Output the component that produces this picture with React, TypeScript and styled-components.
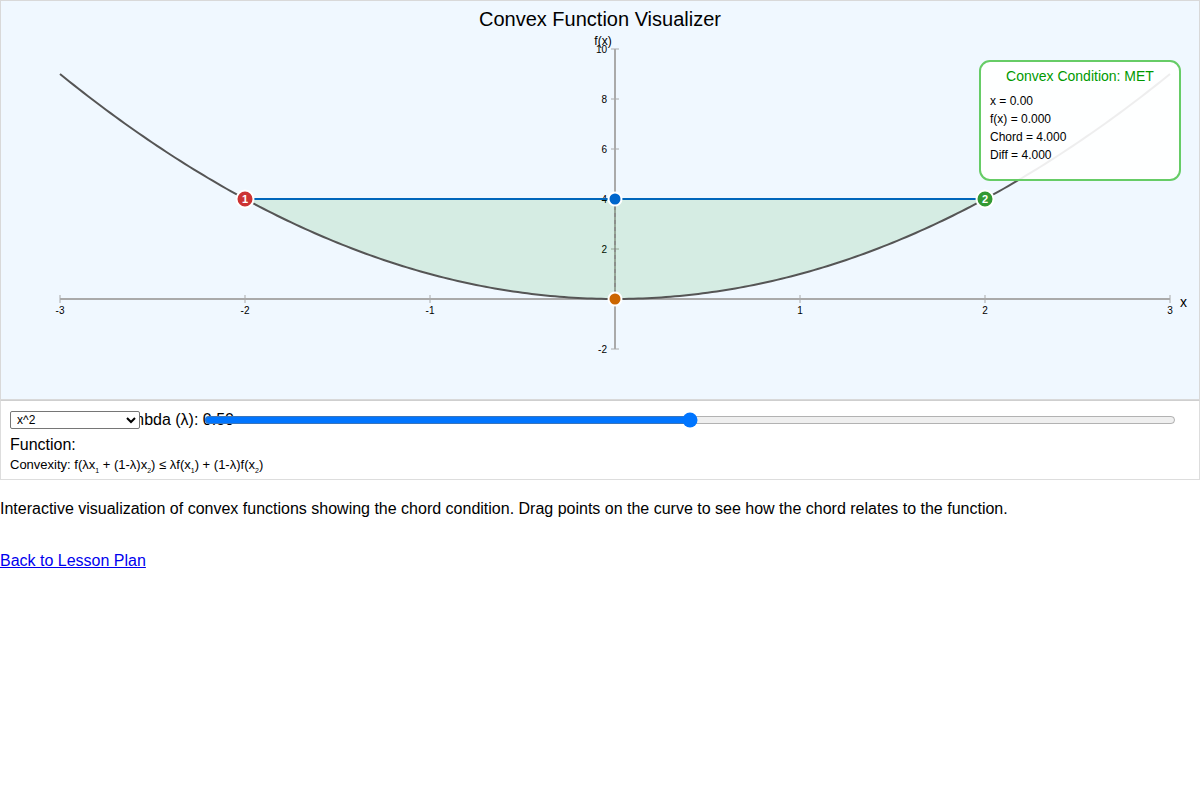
import React from 'react';
import styled, { createGlobalStyle } from 'styled-components';

const GlobalStyle = createGlobalStyle`
  body {
    margin: 0;
    font-family: "Liberation Sans", Arial, sans-serif;
    background: #ffffff;
    color: #000000;
  }
`;

const Page = styled.div`
  width: 1200px;
`;

const ChartSvg = styled.svg`
  display: block;
  width: 1200px;
  height: 400px;
  font-family: "Liberation Sans", Arial, sans-serif;
`;

const ControlsPanel = styled.div`
  box-sizing: border-box;
  height: 80px;
  border: 1px solid #dddddd;
  border-top-color: #cfcfcf;
  padding: 9px 0 0 9px;
  background: #ffffff;
`;

const SliderRow = styled.div`
  display: grid;
  grid-template-columns: 100px 30px 64px 972px;
  align-items: center;
  height: 20px;
`;

const FunctionSelect = styled.select`
  grid-column: 1 / 3;
  grid-row: 1;
  width: 130px;
  height: 18px;
  font-size: 12px;
  font-family: "Liberation Sans", Arial, sans-serif;
  position: relative;
  z-index: 2;
  background: #ffffff;
  border: 1px solid #767676;
  border-radius: 2px;
  padding: 0 2px;
`;

const LambdaLabel = styled.span`
  grid-column: 2 / 5;
  grid-row: 1;
  justify-self: start;
  margin-left: 3px;
  white-space: nowrap;
  font-size: 16px;
  position: relative;
  z-index: 1;
`;

const LambdaSlider = styled.input`
  grid-column: 4 / 5;
  grid-row: 1;
  width: 972px;
  margin: 0;
  position: relative;
  z-index: 3;
`;

const FunctionLine = styled.div`
  font-size: 16px;
  margin-top: 6px;
  line-height: 18px;
`;

const ConvexityLine = styled.div`
  font-size: 13px;
  line-height: 16px;
  margin-top: 3px;
  sub {
    font-size: 7px;
  }
`;

const Description = styled.p`
  font-size: 16px;
  margin: 20px 0 0;
  line-height: 18px;
`;

const BackLink = styled.a`
  display: inline-block;
  margin-top: 34px;
  font-size: 16px;
  color: #0000ee;
  text-decoration: underline;
`;

const X0 = 615;
const Y0 = 299;
const SX = 185;
const SY = 25;
const px = (x: number) => X0 + SX * x;
const py = (y: number) => Y0 - SY * y;
const f = (x: number) => x * x;

function curvePath(a: number, b: number, steps: number) {
  const pts: string[] = [];
  for (let i = 0; i <= steps; i++) {
    const x = a + ((b - a) * i) / steps;
    pts.push(`${px(x).toFixed(2)},${py(f(x)).toFixed(2)}`);
  }
  return pts;
}

function Chart() {
  const curve = curvePath(-3, 3, 240);
  const region = curvePath(-2, 2, 160);
  const fillPath = `M${region.join(' L')} Z`;
  const xTicks = [-3, -2, -1, 0, 1, 2, 3];
  const yTicks = [-2, 0, 2, 4, 6, 8, 10];

  return (
    <ChartSvg viewBox="0 0 1200 400">
      <rect x="0.5" y="0.5" width="1199" height="399" fill="#f0f8ff" stroke="#d9d9d9" />
      <text x="600" y="26" fontSize="20" textAnchor="middle" fill="#000">
        Convex Function Visualizer
      </text>

      {/* axes */}
      <line x1={px(-3)} y1={Y0} x2={px(3)} y2={Y0} stroke="#aaaaaa" strokeWidth="2" />
      <line x1={X0} y1={py(10)} x2={X0} y2={py(-2)} stroke="#aaaaaa" strokeWidth="2" />
      {xTicks.map((t) => (
        <g key={`x${t}`}>
          <line x1={px(t)} y1={Y0 - 4} x2={px(t)} y2={Y0 + 4} stroke="#aaaaaa" strokeWidth="1" />
          {t !== 0 && (
            <text x={px(t)} y={Y0 + 15} fontSize="10" textAnchor="middle" fill="#000">
              {t}
            </text>
          )}
        </g>
      ))}
      {yTicks.map((t) => (
        <g key={`y${t}`}>
          <line x1={X0 - 4} y1={py(t)} x2={X0 + 4} y2={py(t)} stroke="#aaaaaa" strokeWidth="1" />
          {t !== 0 && (
            <text x={X0 - 8} y={py(t) + 4} fontSize="10" textAnchor="end" fill="#000">
              {t}
            </text>
          )}
        </g>
      ))}
      <text x="603" y="45" fontSize="12" textAnchor="middle" fill="#000">f(x)</text>
      <text x="1180" y="307" fontSize="14" fill="#000">x</text>

      {/* region between chord and curve */}
      <path d={fillPath} fill="rgba(0,150,0,0.11)" />
      <polyline points={curve.join(' ')} fill="none" stroke="#555555" strokeWidth="2" />
      <line x1={px(-2)} y1={py(4)} x2={px(2)} y2={py(4)} stroke="#0066bb" strokeWidth="2" />
      <line x1={X0} y1={py(4)} x2={X0} y2={Y0} stroke="#888888" strokeWidth="1.5" strokeDasharray="4 3" />

      {/* points */}
      <circle cx={px(-2)} cy={py(4)} r="8.5" fill="#cc3333" stroke="#ffffff" strokeWidth="2" />
      <text x={px(-2)} y={py(4) + 4} fontSize="11" fontWeight="bold" textAnchor="middle" fill="#fff">1</text>
      <circle cx={px(2)} cy={py(4)} r="8.5" fill="#339933" stroke="#ffffff" strokeWidth="2" />
      <text x={px(2)} y={py(4) + 4} fontSize="11" fontWeight="bold" textAnchor="middle" fill="#fff">2</text>
      <circle cx={X0} cy={py(4)} r="6.5" fill="#0066cc" stroke="#ffffff" strokeWidth="2" />
      <circle cx={X0} cy={Y0} r="6.5" fill="#cc6600" stroke="#ffffff" strokeWidth="2" />

      {/* info box */}
      <rect x="980" y="61" width="200" height="119" rx="10" fill="rgba(255,255,255,0.9)" stroke="#66cc66" strokeWidth="2" />
      <text x="1080" y="81" fontSize="14" textAnchor="middle" fill="#009900">Convex Condition: MET</text>
      <text x="990" y="105" fontSize="12" fill="#000">x = 0.00</text>
      <text x="990" y="123" fontSize="12" fill="#000">f(x) = 0.000</text>
      <text x="990" y="141" fontSize="12" fill="#000">Chord = 4.000</text>
      <text x="990" y="159" fontSize="12" fill="#000">Diff = 4.000</text>
    </ChartSvg>
  );
}

function App() {
  return (
    <Page>
      <GlobalStyle />
      <Chart />
      <ControlsPanel>
        <SliderRow>
          <LambdaLabel>Lambda (λ): 0.50</LambdaLabel>
          <FunctionSelect defaultValue="x^2">
            <option value="x^2">x^2</option>
            <option value="e^x">e^x</option>
            <option value="|x|">|x|</option>
          </FunctionSelect>
          <LambdaSlider type="range" min={0} max={1} step={0.01} defaultValue={0.5} />
        </SliderRow>
        <FunctionLine>Function:</FunctionLine>
        <ConvexityLine>
          Convexity: f(λx<sub>1</sub> + (1-λ)x<sub>2</sub>) ≤ λf(x<sub>1</sub>) + (1-λ)f(x<sub>2</sub>)
        </ConvexityLine>
      </ControlsPanel>
      <Description>
        Interactive visualization of convex functions showing the chord condition. Drag points on the curve to see how the chord relates to the function.
      </Description>
      <BackLink href="#">Back to Lesson Plan</BackLink>
    </Page>
  );
}

export default App;
